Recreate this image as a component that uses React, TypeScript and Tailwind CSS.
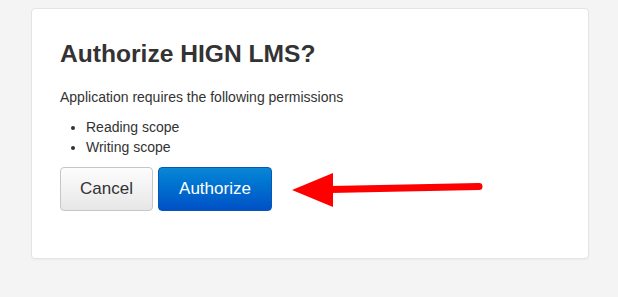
import React from "react";

export default function App() {
  return (
    <div
      className="relative w-[618px] h-[297px] bg-[#f4f4f4] overflow-hidden text-[#333333]"
      style={{ fontFamily: '"Liberation Sans", Arial, sans-serif' }}
    >
      <div className="ml-[31px] pt-[8px]">
        <div className="w-[558px] h-[251px] bg-white border border-[#e4e4e4] rounded-[4px] shadow-[0_1px_2px_rgba(0,0,0,0.04)] pl-[28px] pt-[32px]">
          <h2 className="text-[24.6px] font-bold leading-[26px] text-[#333333]">
            Authorize HIGN LMS?
          </h2>
          <p className="mt-[20px] text-[14px] leading-[20px]">
            Application requires the following permissions
          </p>
          <ul className="mt-[10px] list-disc pl-[26px] text-[14px] leading-[20px]">
            <li>Reading scope</li>
            <li>Writing scope</li>
          </ul>
          <div className="mt-[10px] flex gap-[5px]">
            <button className="h-[44px] w-[93px] flex items-center justify-center rounded-[4px] border border-[#c6c6c6] bg-gradient-to-b from-[#fdfdfd] to-[#e7e7e7] text-[17px] text-[#333333]">
              Cancel
            </button>
            <button className="h-[44px] w-[114px] flex items-center justify-center rounded-[4px] border border-[#0a56b0] bg-gradient-to-b from-[#0b87d6] to-[#0050c6] text-[17px] text-white">
              Authorize
            </button>
          </div>
        </div>
      </div>
      <svg
        className="absolute left-0 top-0 pointer-events-none"
        width="618"
        height="297"
        viewBox="0 0 618 297"
      >
        <line
          x1="330"
          y1="189.5"
          x2="479"
          y2="186.5"
          stroke="#ff0000"
          strokeWidth="7"
          strokeLinecap="round"
        />
        <polygon points="292,190 333,173 333,207" fill="#ff0000" />
      </svg>
    </div>
  );
}
